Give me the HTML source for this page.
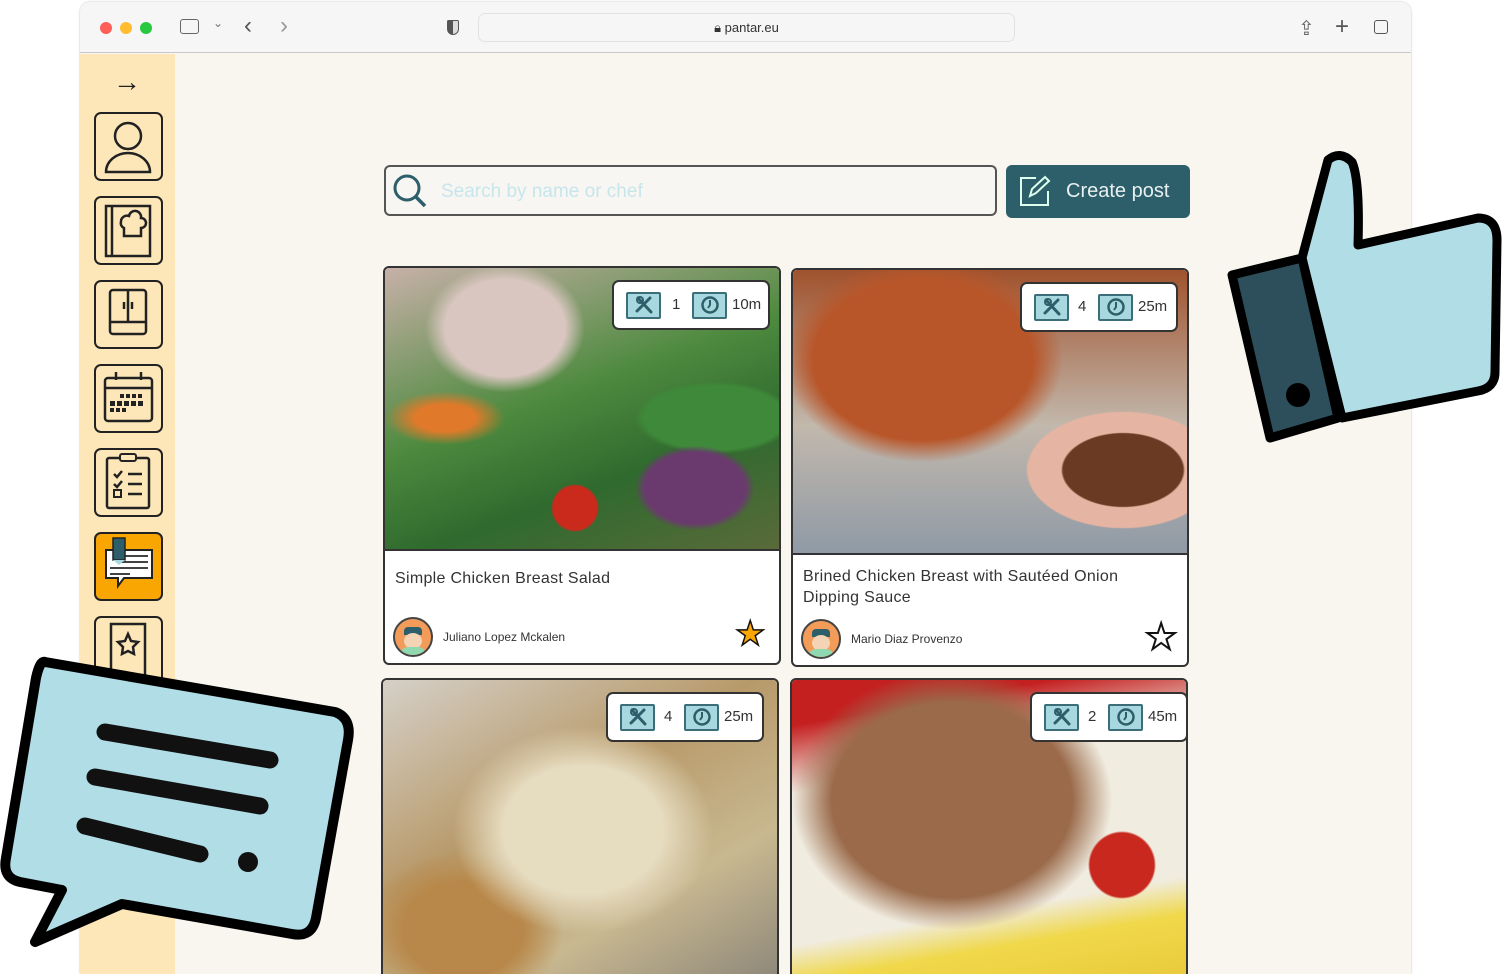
<!DOCTYPE html>
<html><head><meta charset="utf-8"><style>
*{box-sizing:border-box;margin:0;padding:0}
body{width:1503px;height:974px;background:#fff;position:relative;overflow:hidden;font-family:"Liberation Sans",sans-serif}
.win{position:absolute;left:80px;top:2px;width:1331px;height:972px;background:#f8f6ef;border-radius:10px 10px 0 0;overflow:hidden;box-shadow:0 0 2px rgba(0,0,0,.25)}
.bar{position:absolute;left:0;top:0;width:100%;height:51px;background:#f6f6f6;border-bottom:1px solid #c8c8c8}
.dot{position:absolute;top:20px;width:12px;height:12px;border-radius:50%}
.url{position:absolute;left:398px;top:11px;width:537px;height:29px;border:1px solid #e2e2e2;border-radius:7px;background:#f6f6f6;font-size:13px;color:#333;text-align:center;line-height:28px}
.side{position:absolute;left:0;top:52px;width:95px;height:920px;background:#fde7b8}
.ib{position:absolute;left:14px;width:69px;height:69px;border:2.5px solid #222;border-radius:7px}
.search{position:absolute;left:304px;top:163px;width:613px;height:51px;border:2.5px solid #555;border-radius:6px;background:#f7f6f2}
.search span{position:absolute;left:55px;top:14px;font-size:19px;color:#c7e6ec}
.btn{position:absolute;left:926px;top:163px;width:184px;height:53px;background:#2d5f6a;border-radius:6px;color:#e8f0f0;font-size:20px}
.card{position:absolute;width:398px;border:2.5px solid #333;border-radius:6px;background:#fff;overflow:hidden}
.img{position:absolute;left:0;top:0;width:100%}
.badge{position:absolute;top:12px;height:50px;background:#fff;border:2px solid #333;border-radius:7px;font-size:15px;color:#333}
.bi{position:absolute;top:10px;width:35px;height:27px;background:#a8d8df;border:2px solid #3b6e78;border-radius:2px}
.bi svg{position:absolute;left:6px;top:1px}
.title{position:absolute;left:10px;font-size:16px;color:#333;letter-spacing:.3px}
.av{position:absolute;left:8px;width:40px;height:40px;border-radius:50%;background:#f39c5a;border:2px solid #444;overflow:hidden}
.av i{position:absolute;left:9px;top:14px;width:18px;height:16px;background:#f5d3b5;border-radius:50%}
.av s{position:absolute;left:9px;top:8px;width:18px;height:8px;background:#2d5f6a;border-radius:4px 4px 0 0}
.av b{position:absolute;left:5px;top:28px;width:26px;height:14px;background:#8fd8b0;border-radius:8px 8px 0 0}
.auth{position:absolute;left:58px;font-size:12px;color:#333}
</style></head><body>
<svg width="0" height="0" style="position:absolute"><defs>
<symbol id="ut" viewBox="0 0 20 20"><path d="M4 3l13 14M16 3L3 16" stroke="#2d5f6a" stroke-width="3" stroke-linecap="round"/><circle cx="6" cy="5" r="3" fill="none" stroke="#2d5f6a" stroke-width="2"/></symbol>
<symbol id="ck" viewBox="0 0 20 20"><circle cx="10" cy="10" r="7.5" fill="none" stroke="#2d5f6a" stroke-width="2.5"/><path d="M10 5v5l-2 3" stroke="#2d5f6a" stroke-width="2" fill="none"/></symbol>
</defs></svg>
<div class="win">
<div class="bar">
<div class="dot" style="left:20px;background:#fe5f57"></div>
<div class="dot" style="left:40px;background:#febc2e"></div>
<div class="dot" style="left:60px;background:#28c840"></div>
<div style="position:absolute;left:100px;top:17px;width:19px;height:15px;border:1.5px solid #666;border-radius:3px"></div>
<div style="position:absolute;left:133px;top:14px;color:#777;font-size:12px">⌄</div>
<div style="position:absolute;left:164px;top:10px;color:#555;font-size:24px">‹</div>
<div style="position:absolute;left:200px;top:10px;color:#999;font-size:24px">›</div>
<div style="position:absolute;left:367px;top:18px;width:12px;height:15px;background:linear-gradient(90deg,#555 50%,#ddd 50%);border:1.5px solid #555;border-radius:2px 2px 7px 7px"></div>
<div class="url">🔒︎ pantar.eu</div>
<div style="position:absolute;left:1218px;top:14px;color:#666;font-size:20px">⇪</div>
<div style="position:absolute;left:1255px;top:11px;color:#555;font-size:24px">+</div>
<div style="position:absolute;left:1294px;top:18px;width:14px;height:14px;border:1.5px solid #555;border-radius:3px"></div>
</div>
<div class="side">
<div style="position:absolute;left:33px;top:12px;font-size:28px;color:#222">→</div>
<div class="ib" style="top:58px"><svg width="64" height="64"><circle cx="32" cy="22" r="13" fill="none" stroke="#222" stroke-width="2.5"/><path d="M10 58a22 19 0 0 1 44 0z" fill="none" stroke="#222" stroke-width="2.5"/></svg></div>
<div class="ib" style="top:142px"><svg width="64" height="64"><rect x="10" y="8" width="44" height="50" fill="none" stroke="#222" stroke-width="2.5"/><line x1="16" y1="8" x2="16" y2="58" stroke="#222" stroke-width="2.5"/><path d="M25 24a6 6 0 0 1 8-6 6 6 0 0 1 12 2 5 5 0 0 1 0 10v8H28v-8a5 5 0 0 1-3-6z" fill="none" stroke="#222" stroke-width="2.5"/></svg></div>
<div class="ib" style="top:226px"><svg width="64" height="64"><rect x="14" y="8" width="36" height="44" rx="3" fill="none" stroke="#222" stroke-width="2.5"/><line x1="32" y1="8" x2="32" y2="40" stroke="#222" stroke-width="2.5"/><line x1="14" y1="40" x2="50" y2="40" stroke="#222" stroke-width="2.5"/><line x1="28" y1="20" x2="28" y2="27" stroke="#222" stroke-width="2.5"/><line x1="36" y1="20" x2="36" y2="27" stroke="#222" stroke-width="2.5"/></svg></div>
<div class="ib" style="top:310px"><svg width="64" height="64"><rect x="9" y="12" width="47" height="43" rx="3" fill="none" stroke="#222" stroke-width="2.5"/><line x1="9" y1="22" x2="56" y2="22" stroke="#222" stroke-width="2.5"/><line x1="20" y1="6" x2="20" y2="14" stroke="#222" stroke-width="2.5"/><line x1="45" y1="6" x2="45" y2="14" stroke="#222" stroke-width="2.5"/><path d="M24 28h4v4h-4zM30 28h4v4h-4zM36 28h4v4h-4zM42 28h4v4h-4zM14 35h5v5h-5zM21 35h5v5h-5zM28 35h5v5h-5zM35 35h5v5h-5zM42 35h5v5h-5zM14 42h4v4h-4zM20 42h4v4h-4zM26 42h4v4h-4z" fill="#222"/></svg></div>
<div class="ib" style="top:394px"><svg width="64" height="64"><rect x="11" y="8" width="42" height="50" rx="2" fill="none" stroke="#222" stroke-width="2.5"/><rect x="24" y="4" width="16" height="7" rx="2" fill="#fde7b8" stroke="#222" stroke-width="2"/><path d="M18 24l3 3 5-6M18 34l3 3 5-6M32 24h14M32 34h14M32 44h14" fill="none" stroke="#222" stroke-width="2.5"/><rect x="18" y="40" width="7" height="7" fill="none" stroke="#222" stroke-width="2"/></svg></div>
<div class="ib" style="top:478px;background:#f9a602"><svg width="64" height="64"><path d="M10 16h46v28H28l-6 8v-8H10z" fill="#fff" stroke="#222" stroke-width="2"/><path d="M24 22h28M24 28h28M14 34h38M14 40h20" stroke="#444" stroke-width="2"/><rect x="17" y="4" width="12" height="22" fill="#2d5f6a" stroke="#222" stroke-width="1.5"/><path d="M17 26l6 5 6-5z" fill="#a8d8df"/></svg></div>
<div class="ib" style="top:562px"><svg width="64" height="64"><rect x="15" y="6" width="34" height="60" fill="none" stroke="#222" stroke-width="2.5"/><path d="M32 16l3 7 7 1-5 5 1 7-6-3-6 3 1-7-5-5 7-1z" fill="none" stroke="#222" stroke-width="2.5"/></svg></div>
</div>
<div class="search"><svg style="position:absolute;left:6px;top:6px" width="36" height="36"><circle cx="15" cy="15" r="12" fill="none" stroke="#2d5f6a" stroke-width="3"/><line x1="24" y1="24" x2="33" y2="33" stroke="#2d5f6a" stroke-width="3.5"/></svg><span>Search by name or chef</span></div>
<div class="btn"><svg style="position:absolute;left:12px;top:9px" width="34" height="34"><path d="M18 4H3v27h27V17" fill="none" stroke="#dfe" stroke-width="2"/><path d="M12 22l2-7 13-12 4 4-13 12z" fill="none" stroke="#dfe" stroke-width="2"/></svg><span style="position:absolute;left:60px;top:15px">Create post</span></div>

<div class="card" style="left:303px;top:264px;height:399px">
<div class="img" style="height:283px;border-bottom:2.5px solid #333;background:radial-gradient(circle at 190px 240px,#c92a1c 0 22px,transparent 24px),radial-gradient(ellipse at 310px 220px,#6a3a6e 0 50px,transparent 60px),radial-gradient(ellipse at 120px 60px,#d9c6c0 0 60px,transparent 80px),radial-gradient(ellipse at 330px 150px,#3f8a3a 0 70px,transparent 80px),radial-gradient(ellipse at 60px 150px,#e07a2a 0 30px,transparent 60px),linear-gradient(160deg,#c7b0a8,#4d8a3e 45%,#2f6a2e 70%,#5a6a3a)"></div>
<div class="badge" style="left:227px;width:158px"><div class="bi" style="left:12px"><svg width="20" height="20"><use href="#ut"/></svg></div><span style="position:absolute;left:58px;top:14px">1</span><div class="bi" style="left:78px"><svg width="20" height="20"><use href="#ck"/></svg></div><span style="position:absolute;left:118px;top:14px">10m</span></div>
<div class="title" style="top:302px">Simple Chicken Breast Salad</div>
<div class="av" style="top:349px"><s></s><i></i><b></b></div><div class="auth" style="top:362px">Juliano Lopez Mckalen</div>
<div style="position:absolute;left:350px;top:346px;font-size:34px;color:#f9a602;-webkit-text-stroke:1.5px #111">★</div>
</div>

<div class="card" style="left:711px;top:266px;height:399px">
<div class="img" style="height:285px;border-bottom:2.5px solid #333;background:radial-gradient(ellipse at 330px 200px,#6b3a22 0 60px,#e5b4a2 62px 95px,transparent 97px),radial-gradient(ellipse at 130px 90px,#b8562a 0 110px,transparent 140px),linear-gradient(180deg,#a0522d,#c2b8ac 55%,#8f9aa6)"></div>
<div class="badge" style="left:227px;width:158px"><div class="bi" style="left:12px"><svg width="20" height="20"><use href="#ut"/></svg></div><span style="position:absolute;left:56px;top:14px">4</span><div class="bi" style="left:76px"><svg width="20" height="20"><use href="#ck"/></svg></div><span style="position:absolute;left:116px;top:14px">25m</span></div>
<div class="title" style="top:296px;width:370px;line-height:21px">Brined Chicken Breast with Sautéed Onion Dipping Sauce</div>
<div class="av" style="top:349px"><s></s><i></i><b></b></div><div class="auth" style="top:362px">Mario Diaz Provenzo</div>
<div style="position:absolute;left:352px;top:346px;font-size:36px;color:#fff;-webkit-text-stroke:2px #111">★</div>
</div>

<div class="card" style="left:301px;top:676px;height:310px">
<div class="img" style="height:310px;background:radial-gradient(ellipse at 200px 150px,#e6dcc0 0 80px,transparent 130px),radial-gradient(ellipse at 80px 250px,#b8884a 0 60px,transparent 100px),linear-gradient(150deg,#d5d0c8,#b89a6a 40%,#c8b890 70%,#8a8478)"></div>
<div class="badge" style="left:223px;width:158px"><div class="bi" style="left:12px"><svg width="20" height="20"><use href="#ut"/></svg></div><span style="position:absolute;left:56px;top:14px">4</span><div class="bi" style="left:76px"><svg width="20" height="20"><use href="#ck"/></svg></div><span style="position:absolute;left:116px;top:14px">25m</span></div>
</div>

<div class="card" style="left:710px;top:676px;height:310px">
<div class="img" style="height:310px;background:radial-gradient(circle at 330px 185px,#c8281e 0 32px,transparent 34px),radial-gradient(ellipse at 160px 120px,#9a6a4a 0 120px,transparent 160px),linear-gradient(170deg,#c42020 0 12%,#f0ece0 30%,#f0ece0 70%,#f0d84a 80%,#e8c83a)"></div>
<div class="badge" style="left:238px;width:158px"><div class="bi" style="left:12px"><svg width="20" height="20"><use href="#ut"/></svg></div><span style="position:absolute;left:56px;top:14px">2</span><div class="bi" style="left:76px"><svg width="20" height="20"><use href="#ck"/></svg></div><span style="position:absolute;left:116px;top:14px">45m</span></div>
</div>
</div>

<svg style="position:absolute;left:0;top:0" width="1503" height="974">
<path d="M1302 258 L1328 160 Q1340 150 1352 162 Q1360 180 1358 245 L1478 218 Q1497 218 1497 240 L1495 372 Q1495 388 1478 391 L1342 418 Z" fill="#b0dde6" stroke="#000" stroke-width="9" stroke-linejoin="round"/>
<path d="M1232 275 L1302 258 L1338 418 L1270 438 Z" fill="#2d4f5c" stroke="#000" stroke-width="9" stroke-linejoin="round"/>
<circle cx="1298" cy="395" r="12" fill="#000"/>
<path d="M45 662 L335 712 Q352 718 348 740 L316 918 Q312 938 292 934 L122 904 L35 942 L62 890 L20 882 Q2 878 6 858 L36 678 Q40 660 45 662 Z" fill="#b0dde6" stroke="#000" stroke-width="10" stroke-linejoin="round"/>
<path d="M105 732 L270 760 M95 777 L260 806 M85 826 L200 854" stroke="#111" stroke-width="17" stroke-linecap="round"/>
<circle cx="248" cy="862" r="10" fill="#111"/>
</svg>
</body></html>
